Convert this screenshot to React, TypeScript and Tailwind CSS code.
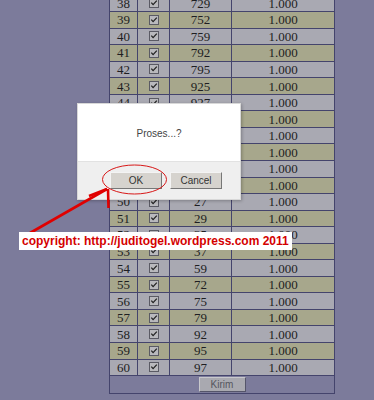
const rows: { no: number; num: string }[] = [
  { no: 38, num: "729" },
  { no: 39, num: "752" },
  { no: 40, num: "759" },
  { no: 41, num: "792" },
  { no: 42, num: "795" },
  { no: 43, num: "925" },
  { no: 44, num: "927" },
  { no: 45, num: "932" },
  { no: 46, num: "957" },
  { no: 47, num: "972" },
  { no: 48, num: "975" },
  { no: 49, num: "992" },
  { no: 50, num: "27" },
  { no: 51, num: "29" },
  { no: 52, num: "35" },
  { no: 53, num: "37" },
  { no: 54, num: "59" },
  { no: 55, num: "72" },
  { no: 56, num: "75" },
  { no: 57, num: "79" },
  { no: 58, num: "92" },
  { no: 59, num: "95" },
  { no: 60, num: "97" },
];

function CheckBox() {
  return (
    <svg width="10" height="10" viewBox="0 0 10 10" aria-hidden>
      <rect x="0.5" y="0.5" width="9" height="9" fill="#b9b9bd" stroke="#5a5a64" />
      <path d="M2.3 4.6 L4.1 6.6 L7.8 2.6" fill="none" stroke="#222" strokeWidth="1.3" />
    </svg>
  );
}

function Row({ no, num }: { no: number; num: string }) {
  const odd = no % 2 === 1;
  const bg = odd ? "bg-[#a7a78c]" : "bg-[#a9a9b2]";
  return (
    <div className={`flex h-[16.55px] border-b border-[#44446c] ${bg}`}>
      <div className="w-[28px] border-r border-[#44446c] flex items-center justify-center">{no}</div>
      <div className="w-[32px] border-r border-[#44446c] flex items-center justify-center">
        <CheckBox />
      </div>
      <div className="w-[62px] border-r border-[#44446c] flex items-center justify-center">{num}</div>
      <div className="flex-1 flex items-center justify-center">1.000</div>
    </div>
  );
}

export default function App() {
  return (
    <div className="relative w-[374px] h-[400px] overflow-hidden bg-[#7c7b9b]">
      <div
        className="ml-[109px] w-[226px] -mt-[5.5px] border-l border-r border-t border-[#44446c] text-[13px] text-[#1e1e22] leading-none"
        style={{ fontFamily: '"Liberation Serif", serif' }}
      >
        {rows.map((r) => (
          <Row key={r.no} no={r.no} num={r.num} />
        ))}
        <div className="h-[17.5px] border-b border-[#44446c] flex items-start justify-center pt-[1px]">
          <button
            type="button"
            className="w-[47px] h-[15px] bg-[#a9a9b0] border border-t-[#c8c8cc] border-l-[#c8c8cc] border-b-[#55556a] border-r-[#55556a] text-[10px] text-[#55555e] leading-none"
            style={{ fontFamily: '"Liberation Sans", Arial, sans-serif' }}
          >
            Kirim
          </button>
        </div>
      </div>

      {/* confirm dialog */}
      <div
        className="absolute left-[77px] top-[103px] w-[164px] h-[97px] bg-white border border-[#d8d8d8] shadow-[1px_1px_3px_rgba(0,0,0,0.25)] flex flex-col"
        style={{ fontFamily: '"Liberation Sans", Arial, sans-serif' }}
      >
        <div className="h-[57px] flex items-center justify-center text-[10px] text-[#444] pt-[2px]">Proses...?</div>
        <div className="flex-1 bg-[#efefef] border-t border-[#e2e2e2] flex items-start gap-[8px] pl-[32px] pt-[10px]">
          <button
            type="button"
            className="w-[52px] h-[17px] bg-[#d6d3ce] border border-t-[#f4f4f4] border-l-[#f4f4f4] border-b-[#777] border-r-[#777] text-[10px] text-[#333] leading-none"
          >
            OK
          </button>
          <button
            type="button"
            className="w-[52px] h-[17px] bg-[#d6d3ce] border border-t-[#f4f4f4] border-l-[#f4f4f4] border-b-[#777] border-r-[#777] text-[10px] text-[#333] leading-none"
          >
            Cancel
          </button>
        </div>
      </div>

      {/* annotation */}
      <svg className="absolute left-0 top-0" width="374" height="400" viewBox="0 0 374 400" aria-hidden>
        <ellipse cx="134.5" cy="179.5" rx="32" ry="14.5" fill="none" stroke="#d81818" strokeWidth="1" />
        <path d="M30 233 L107 189" stroke="#e00000" strokeWidth="2.6" fill="none" />
        <path d="M108 189 L108.5 208 M107 189 L89 196" stroke="#e00000" strokeWidth="2.6" fill="none" />
      </svg>

      <div
        className="absolute left-[19px] top-[232px] w-[273px] h-[18px] bg-white flex items-center pl-[3px] text-[12px] font-bold text-[#d40000] leading-none whitespace-nowrap"
        style={{ fontFamily: '"Liberation Sans", Arial, sans-serif' }}
      >
        copyright: http://juditogel.wordpress.com 2011
      </div>
    </div>
  );
}
